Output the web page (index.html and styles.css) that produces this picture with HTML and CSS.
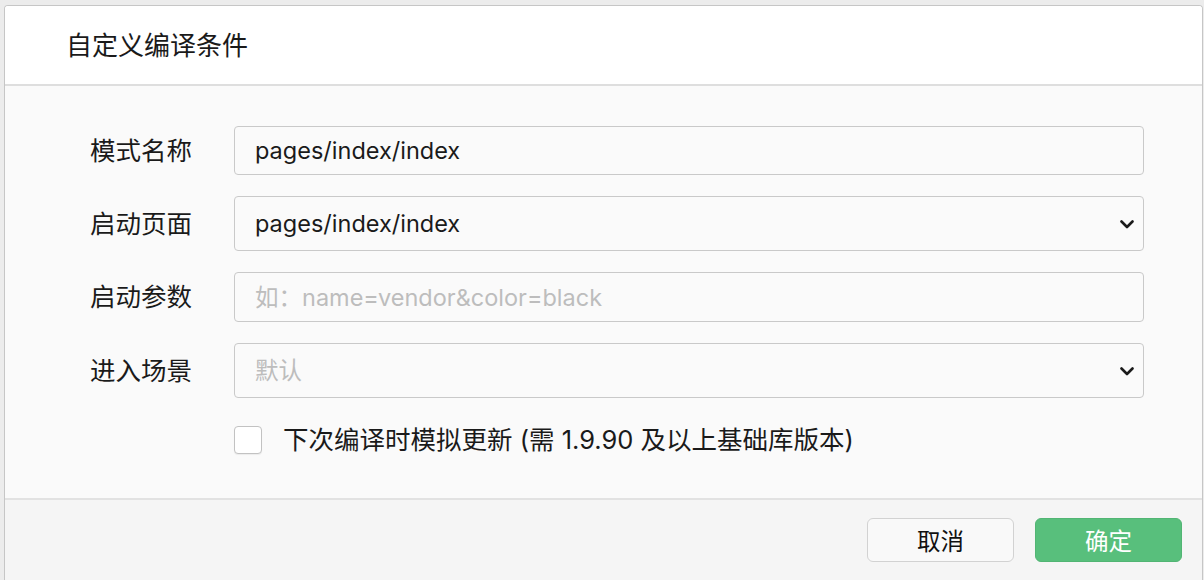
FILE: index.html
```html
<!DOCTYPE html>
<html>
<head>
<meta charset="utf-8">
<title>自定义编译条件</title>
<link rel="stylesheet" href="styles.css">
</head>
<body>
	<div class="backdrop">
		<div class="dialog">
			<div class="dialog-head">自定义编译条件</div>
			<div class="dialog-body">
				<div class="form-grid">
					<div class="label">模式名称</div>
					<input class="field" type="text" value="pages/index/index">

					<div class="label">启动页面</div>
					<div class="select-wrap">
						<select class="field select">
							<option>pages/index/index</option>
						</select>
						<svg class="chevron" width="14" height="9" viewBox="0 0 14 9"><path d="M1.5 1.5 L7 7 L12.5 1.5" fill="none" stroke="#1a1a1a" stroke-width="2.6" stroke-linecap="round" stroke-linejoin="round"/></svg>
					</div>

					<div class="label">启动参数</div>
					<input class="field" type="text" placeholder="如：name=vendor&amp;color=black">

					<div class="label">进入场景</div>
					<div class="select-wrap">
						<select class="field select muted">
							<option>默认</option>
						</select>
						<svg class="chevron" width="14" height="9" viewBox="0 0 14 9"><path d="M1.5 1.5 L7 7 L12.5 1.5" fill="none" stroke="#1a1a1a" stroke-width="2.6" stroke-linecap="round" stroke-linejoin="round"/></svg>
					</div>
				</div>
				<label class="check-row">
					<span class="checkbox"></span>
					<span class="check-text">下次编译时模拟更新 (需 1.9.90 及以上基础库版本)</span>
				</label>
			</div>
			<div class="dialog-foot">
				<button class="btn" type="button">取消</button>
				<button class="btn primary" type="button">确定</button>
			</div>
		</div>
	</div>
</body>
</html>
```

FILE: styles.css
```css
* {
	box-sizing: border-box;
}

body {
	margin: 0;
	font-family: Inter, 'Noto Sans CJK SC', sans-serif;
	background: #ececec;
	color: #1a1a1a;
	overflow: hidden;
}

.backdrop {
	height: 580px;
	padding: 5px 1px 0 4px;
	background: #ececec;
}

.dialog {
	height: 575px;
	display: flex;
	flex-direction: column;
	border: 1px solid #c6c6c6;
	border-bottom: none;
	border-radius: 4px 4px 0 0;
	background: #fff;
	overflow: hidden;
}

.dialog-head {
	height: 80px;
	flex: none;
	display: flex;
	align-items: center;
	padding: 0 0 4px 61px;
	font-size: 26px;
	background: #fff;
	border-bottom: 2px solid #dedede;
}

.dialog-body {
	flex: none;
	background: #fafafa;
	padding: 40px 58px 44px 85px;
	border-bottom: 2px solid #e2e2e2;
}

.form-grid {
	display: grid;
	grid-template-columns: 144px 1fr;
	grid-template-rows: 49px 55px 50px 55px;
	row-gap: 21px;
	align-items: center;
}

.label {
	font-size: 25.5px;
	color: #1a1a1a;
	padding-bottom: 5px;
}

.field {
	width: 100%;
	height: 100%;
	margin: 0;
	padding: 0 20px;
	font-family: Inter, 'Noto Sans CJK SC', sans-serif;
	font-size: 23.5px;
	color: #1a1a1a;
	background: #fafafa;
	border: 1px solid #c9c9c9;
	border-radius: 4px;
	outline: none;
}

.field::placeholder {
	color: #bdbdbd;
}

.select-wrap {
	position: relative;
	height: 100%;
}

.select {
	appearance: none;
	-webkit-appearance: none;
}

.select.muted {
	color: #bdbdbd;
}

.chevron {
	position: absolute;
	right: 10px;
	top: 50%;
	margin-top: -4px;
	pointer-events: none;
}

.check-row {
	display: flex;
	align-items: center;
	gap: 21px;
	margin: 28px 0 0 144px;
	font-size: 25.5px;
	height: 28px;
}

.check-text {
	padding-bottom: 5px;
}

.checkbox {
	width: 28px;
	height: 28px;
	flex: none;
	background: #fff;
	border: 1px solid #c2c2c2;
	border-radius: 4px;
	box-shadow: 0 1px 1px rgba(0, 0, 0, 0.06);
}

.dialog-foot {
	flex: 1;
	background: #f5f5f5;
	display: flex;
	justify-content: flex-end;
	align-items: flex-start;
	gap: 21px;
	padding: 18px 20px 0 0;
}

.btn {
	width: 147px;
	height: 44px;
	font-family: Inter, 'Noto Sans CJK SC', sans-serif;
	font-size: 23.5px;
	color: #111;
	background: #f9f9f9;
	border: 1px solid #d2d2d2;
	border-radius: 6px;
}

.btn.primary {
	color: #fff;
	background: #58bf7c;
	border-color: #52b574;
}
```
